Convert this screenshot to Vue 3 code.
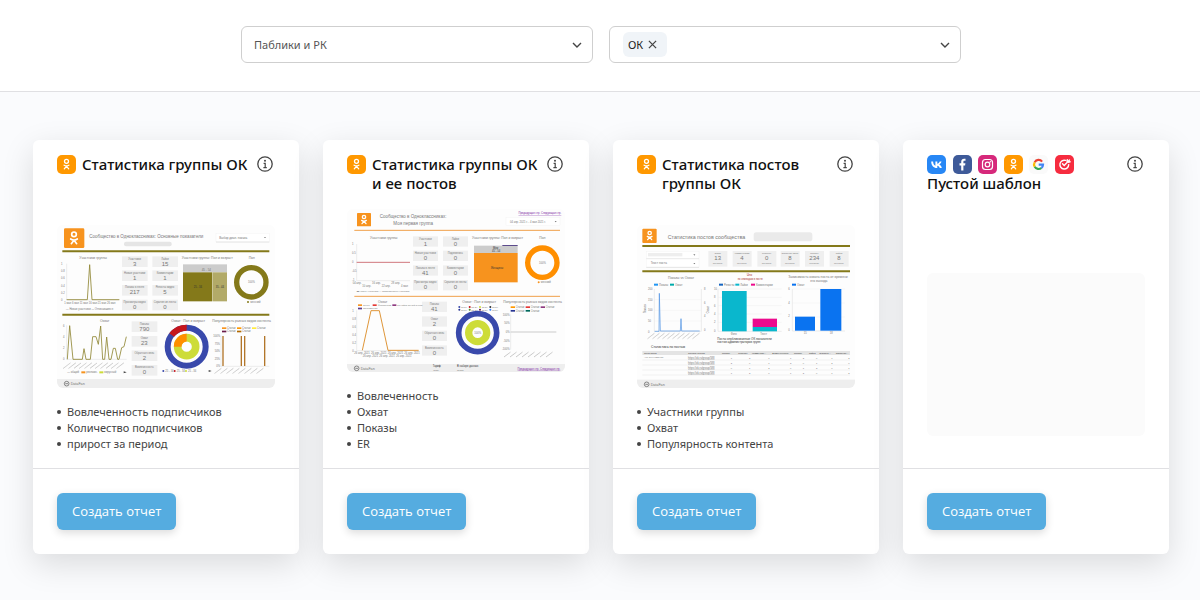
<script setup>
import { ref } from 'vue'

const category = ref('ads')
const network = ref('')
const chips = ref(['ОК'])

const cards = [
  {
    title: 'Статистика группы ОК',
    networks: ['ok'],
    thumb: 'group',
    points: ['Вовлеченность подписчиков', 'Количество подписчиков', 'прирост за период'],
  },
  {
    title: 'Статистика группы ОК и ее постов',
    networks: ['ok'],
    thumb: 'groupPosts',
    points: ['Вовлеченность', 'Охват', 'Показы', 'ER'],
  },
  {
    title: 'Статистика постов группы ОК',
    networks: ['ok'],
    thumb: 'posts',
    points: ['Участники группы', 'Охват', 'Популярность контента'],
  },
  {
    title: 'Пустой шаблон',
    networks: ['vk', 'fb', 'ig', 'ok', 'google', 'target'],
    thumb: 'empty',
    points: [],
  },
]

const names = {
  vk: 'ВКонтакте',
  fb: 'Facebook',
  ig: 'Instagram',
  ok: 'Одноклассники',
  google: 'Google',
  target: 'myTarget',
}

const tilesA = [
  { x: 216, y: 109, label: 'Участники', value: '3' },
  { x: 307, y: 109, label: 'Лайки', value: '15' },
  { x: 216, y: 151, label: 'Новые участники', value: '1' },
  { x: 307, y: 151, label: 'Комментарии', value: '1' },
  { x: 216, y: 195, label: 'Показы в ленте', value: '217' },
  { x: 307, y: 195, label: 'Репосты видео', value: '5' },
  { x: 216, y: 239, label: 'Просмотры видео', value: '0' },
  { x: 307, y: 239, label: 'Скрытия из ленты', value: '0' },
  { x: 245, y: 304, label: 'Показы', value: '790' },
  { x: 245, y: 348, label: 'Охват', value: '23' },
  { x: 245, y: 391, label: 'Обратная связь', value: '2' },
  { x: 245, y: 435, label: 'Вовлеченность', value: '0' },
]

const tilesB = [
  { x: 219, y: 94, label: 'Участники', value: '1' },
  { x: 309, y: 94, label: 'Лайки', value: '0' },
  { x: 219, y: 137, label: 'Новые участники', value: '0' },
  { x: 309, y: 137, label: 'Поделились', value: '0' },
  { x: 219, y: 181, label: 'Показы в ленте', value: '41' },
  { x: 309, y: 181, label: 'Комментарии', value: '0' },
  { x: 219, y: 225, label: 'Просмотры видео', value: '0' },
  { x: 309, y: 225, label: 'Скрытия из ленты', value: '0' },
  { x: 246, y: 290, label: 'Показы', value: '41' },
  { x: 246, y: 334, label: 'Охват', value: '2' },
  { x: 246, y: 377, label: 'Обратная связь', value: '0' },
  { x: 246, y: 421, label: 'Вовлеченность', value: '0' },
]

const tilesC = [
  { x: 235, label: 'Охват', value: '13' },
  { x: 308, label: 'Комментарии', value: '4' },
  { x: 382, label: 'Репосты', value: '0' },
  { x: 452, label: 'Обратная связь', value: '8' },
  { x: 525, label: 'Показы', value: '234' },
  { x: 599, label: 'Лайки', value: '8' },
]

const tableHead = [
  [42, 'Текст поста'], [174, 'Ссылка на пост'], [276, 'Показы'], [325, 'Репосты'], [366, 'Комментар…'],
  [427, 'Вовлеченность'], [492, 'Показы'], [537, 'Лайки'], [568, 'Обратна…'], [617, 'Обратная…'],
]
const tableCols = [302, 357, 415, 480, 518, 558, 604, 655]
</script>

<template>
  <div class="page">
    <header class="filters">
      <div class="field">
        <select v-model="category" class="select" aria-label="Категория">
          <option value="ads">Паблики и РК</option>
        </select>
        <svg class="chevron" viewBox="0 0 10 6" aria-hidden="true"><path d="M1 1l4 4 4-4" /></svg>
      </div>
      <div class="field">
        <select v-model="network" class="select" aria-label="Социальная сеть">
          <option value=""></option>
        </select>
        <div class="chips">
          <span v-for="chip in chips" :key="chip" class="chip">
            {{ chip }}
            <button class="chip-remove" type="button" :aria-label="'Убрать ' + chip" @click="chips = []">
              <svg viewBox="0 0 10 10" aria-hidden="true"><path d="M1 1l8 8M9 1l-8 8" /></svg>
            </button>
          </span>
        </div>
        <svg class="chevron" viewBox="0 0 10 6" aria-hidden="true"><path d="M1 1l4 4 4-4" /></svg>
      </div>
    </header>

    <main class="cards">
      <article v-for="card in cards" :key="card.title" class="card">
        <div class="body">
          <div class="head">
            <div class="heading" :class="{ stacked: card.networks.length > 1 }">
              <div class="networks">
                <svg v-for="n in card.networks" :key="n" class="network" viewBox="0 0 19 19" role="img" :aria-label="names[n]">
                  <template v-if="n === 'ok'">
                    <rect width="19" height="19" rx="5" fill="#ff9800" />
                    <circle cx="9.5" cy="6.3" r="2" fill="none" stroke="#fff" stroke-width="1.3" />
                    <path d="M7.1 10.200q2.400 1.400 4.800 0M9.500 11.200L7.300 13.800M9.500 11.200l2.200 2.600" fill="none" stroke="#fff" stroke-width="1.300" stroke-linecap="round" />
                  </template>
                  <template v-else-if="n === 'vk'">
                    <rect width="19" height="19" rx="5" fill="#2787f5" />
                    <path d="M9.9 13C6.5 13 4.3 10.600 4.200 6.500h1.900c.1 2.600 1.300 3.900 2.300 4.200V6.500h1.900v2.300c1-.1 2-1.200 2.400-2.300h1.800c-.3 1.400-1.400 2.500-2.200 3 .8.4 2 1.300 2.500 3.500h-2c-.4-1.200-1.300-2-2.500-2.200V13z" fill="#fff" />
                  </template>
                  <template v-else-if="n === 'fb'">
                    <rect width="19" height="19" rx="5" fill="#3e5a99" />
                    <path d="M8.200 15.500V10.400H6.500V8.200h1.700V6.700c0-2 1.200-3 2.900-3 .7 0 1.300.1 1.400.1v1.900h-1c-.9 0-1.100.5-1.100 1.100v1.400h2l-.3 2.200h-1.700v5.100z" fill="#fff" />
                  </template>
                  <template v-else-if="n === 'ig'">
                    <rect width="19" height="19" rx="5" fill="#d6297b" />
                    <rect x="4.500" y="4.500" width="10" height="10" rx="3" fill="none" stroke="#fff" stroke-width="1.200" />
                    <circle cx="9.500" cy="9.500" r="2.300" fill="none" stroke="#fff" stroke-width="1.200" />
                    <circle cx="12.300" cy="6.700" r=".7" fill="#fff" />
                  </template>
                  <template v-else-if="n === 'google'">
                    <rect width="19" height="19" rx="5" fill="#fafafa" />
                    <g fill="none" stroke-width="2.200">
                      <path d="M13.100 6.600A4.500 4.500 0 0 0 5.700 7.200" stroke="#ea4335" />
                      <path d="M5.700 7.200A4.500 4.500 0 0 0 5.700 11.800" stroke="#fbbc05" />
                      <path d="M5.700 11.800A4.500 4.500 0 0 0 12.400 13" stroke="#34a853" />
                      <path d="M12.400 13A4.500 4.500 0 0 0 14 9.700H9.700" stroke="#4285f4" />
                    </g>
                  </template>
                  <template v-else>
                    <rect width="19" height="19" rx="5" fill="#f62c3f" />
                    <g fill="none" stroke="#fff" stroke-width="1.400" stroke-linecap="round">
                      <path d="M10.600 5.400A4.400 4.400 0 1 0 13.700 9.600" />
                      <path d="M7.500 8.800l1.700 1.800 4.300-4.500M12 6.300l.3-1.600M13.500 7.200l1.600-.4M13.500 6.100l1-1" />
                    </g>
                  </template>
                </svg>
              </div>
              <h2 class="title">{{ card.title }}</h2>
            </div>
            <button class="info" type="button" aria-label="Подробнее">
              <svg viewBox="0 0 16 16" aria-hidden="true">
                <circle cx="8" cy="8" r="7.200" fill="none" stroke="#444" stroke-width="1.300" />
                <circle cx="8" cy="4.700" r="1" fill="#444" />
                <path d="M6.600 7.300H8.200V11.500M6.400 11.600h3.400" fill="none" stroke="#444" stroke-width="1.200" />
              </svg>
            </button>
          </div>

          <svg v-if="card.thumb === 'group'" class="thumb" viewBox="21 15 654 489" aria-hidden="true">
            <rect x="21" y="15" width="654" height="489" fill="#fdfdfd" />
            <rect x="42" y="25" width="61" height="59" rx="4" fill="#f7931e" />
            <g fill="none" stroke="#fff" stroke-width="5" stroke-linecap="round">
              <circle cx="72" cy="43" r="7" /><path d="M62 57q10 7 20 0M72 61l-8 10M72 61l8 10" />
            </g>
            <text x="118" y="53" font-size="13.500">Сообщество в Одноклассниках: Основные показатели</text>
            <rect x="222" y="65" width="143" height="14" rx="6" fill="#e5e5e5" />
            <rect x="498" y="40" width="160" height="26" fill="#fff" stroke="#eee" /><path d="M498 66h160" stroke="#bbb" />
            <text x="508" y="56" font-size="9">Выбор диап. показа</text><path d="M642 51h6l-3 4z" fill="#777" />
            <path d="M37 94H658M37 284H658" stroke="#84791a" stroke-width="6" />
            <text x="88" y="116" font-size="10">Участники группы</text>
            <text x="395" y="116" font-size="10">Участники группы: Пол и возраст</text><text x="596" y="116" font-size="10">Пол</text>
            <path d="M50 131V240M50 240H208" class="axis" />
            <g font-size="8"><text v-for="(t, i) in ['1', '0.8', '0.6', '0.4', '0.2', '0']" :key="i" x="33" :y="134 + i * 22">{{ t }}</text></g>
            <path d="M50 239H112L119 134L126 239H208" fill="none" stroke="#8f8633" stroke-width="2.500" />
            <text x="43" y="251" font-size="8">1 мая 6 мая 11 мая 16 мая 21 мая 26 мая</text>
            <text x="48" y="269" font-size="8">— Новые участники — Отписавшиеся</text>
            <g v-for="t in tilesA" :key="t.x + '-' + t.y">
              <rect :x="t.x" :y="t.y" width="77" height="32" fill="#efefef" />
              <text :x="t.x + 38" :y="t.y + 10" font-size="8" text-anchor="middle">{{ t.label }}</text>
              <text :x="t.x + 38" :y="t.y + 28" font-size="18" text-anchor="middle">{{ t.value }}</text>
            </g>
            <rect x="399" y="133" width="132" height="24" fill="#ccc" /><text x="455" y="154" font-size="9" fill="#222">45 - 54</text>
            <rect x="399" y="157" width="87" height="87" fill="#84791a" /><rect x="487" y="157" width="44" height="87" fill="#b2aa68" />
            <text x="431" y="204" font-size="8" class="dark">25 - 34</text><text x="497" y="204" font-size="8" class="dark">35 - 44</text>
            <circle cx="604" cy="187" r="44" fill="none" stroke="#84791a" stroke-width="16" /><text x="594" y="190" font-size="8">100%</text>
            <circle cx="594" cy="246" r="3" fill="#84791a" /><text x="601" y="249" font-size="8">женский</text>
            <text x="150" y="306" font-size="10">Охват</text><text x="364" y="306" font-size="10">Охват : Пол и возраст</text>
            <text x="487" y="306" font-size="10">Популярность разных видов контента</text>
            <path d="M50 316V418H230" class="axis" />
            <g font-size="8"><text x="39" y="320">6</text><text x="39" y="354">4</text><text x="39" y="387">2</text><text x="39" y="421">0</text></g>
            <path d="M52 418L59 317L69 418H97L102 386L108 418H121L128 350H138L145 373L152 318L158 418H164L170 351L177 418H183L190 385H196L203 418H207L215 383L222 380L229 350" fill="none" stroke="#8f8633" stroke-width="2.500" />
            <g class="ticks"><path v-for="i in 11" :key="i" :d="`M${24 + i * 16} 445l21-16`" /></g>
            <text x="52" y="460" font-size="8">— общий</text><rect x="94" y="454" width="12" height="6" fill="#f7931e" /><text x="109" y="460" font-size="8">рекламн.</text>
            <rect x="148" y="454" width="12" height="6" fill="#cddc39" /><text x="163" y="460" font-size="8">вирусный</text><path d="M221 454l9 3-9 3z" fill="#444" />
            <circle cx="410" cy="380" r="57" fill="none" stroke="#3949ab" stroke-width="18" />
            <path d="M365 345A57 57 0 0 1 410 323" fill="none" stroke="#c5161d" stroke-width="18" />
            <circle cx="410" cy="380" r="27" fill="none" stroke="#cddc39" stroke-width="23" />
            <path d="M383 380A27 27 0 0 1 410 353" fill="none" stroke="#ff8f00" stroke-width="23" />
            <g v-for="(c, i) in ['#3949ab', '#c5161d', '#cddc39']" :key="c"><circle :cx="340 + i * 34" cy="453" r="3" :fill="c" /><text :x="346 + i * 34" y="456" font-size="8">25 - 34</text></g>
            <path d="M476 450l9 3-9 3z" fill="#444" />
            <g v-for="(c, i) in ['#f7931e', '#ff9800', '#ffeb3b', '#6a1b4a', '#b26a00']" :key="c">
              <rect :x="516 + (i % 3) * 45" :y="i < 3 ? 322 : 332" width="13" height="5" :fill="c" /><text :x="531 + (i % 3) * 45" :y="i < 3 ? 327 : 337" font-size="8">Статьи</text>
            </g>
            <path d="M513 347V439H658" class="axis" /><path d="M519 348V438M574 348V438M584 348V438M644 348V438" stroke="#b2762a" stroke-width="4" />
            <g font-size="8"><text x="490" y="351">100%</text><text x="494" y="374">75%</text><text x="494" y="397">50%</text><text x="494" y="420">25%</text><text x="499" y="442">0%</text></g>
            <g class="ticks"><path v-for="i in 8" :key="i" :d="`M${476 + i * 18} 460l20-15`" /></g>
            <rect x="21" y="477" width="654" height="27" fill="#eee" /><circle cx="50" cy="491" r="7" fill="none" stroke="#555" stroke-width="2" /><path d="M46 491h8" stroke="#555" stroke-width="2" />
            <text x="62" y="495" font-size="11">DataFan</text>
          </svg>

          <svg v-else-if="card.thumb === 'groupPosts'" class="thumb" viewBox="21 12 654 489" aria-hidden="true">
            <rect x="21" y="12" width="654" height="489" fill="#fdfdfd" />
            <rect x="51" y="24" width="42" height="40" rx="2" fill="#f7931e" />
            <g fill="none" stroke="#fff" stroke-width="4" stroke-linecap="round">
              <circle cx="72" cy="36" r="5" /><path d="M65 46q7 5 14 0M72 49l-6 7M72 49l6 7" />
            </g>
            <text x="119" y="39" font-size="13.500">Сообщество в Одноклассниках:</text><text x="160" y="60" font-size="13.500">Моя первая группа</text>
            <text x="664" y="28" font-size="8" class="link" text-anchor="end">Предыдущая стр. Следующая стр.</text>
            <rect x="498" y="37" width="162" height="25" fill="#fff" stroke="#eee" /><text x="510" y="53" font-size="8">04 апр. 2021 г. - 4 мая 2021 г.</text><path d="M644 48h6l-3 4z" fill="#777" />
            <path d="M43 76H660M43 274H660" stroke="#f0a04b" stroke-width="3" />
            <text x="90" y="101" font-size="10">Участники группы</text><text x="396" y="101" font-size="10">Участники группы: Пол и возраст</text><text x="598" y="101" font-size="10">Пол</text>
            <path d="M50 117V227H210" class="axis" />
            <g font-size="8"><text v-for="(t, i) in ['1', '0.5', '0', '-0.5', '-1']" :key="t" x="36" :y="121 + i * 27">{{ t }}</text></g>
            <path d="M50 172H210" stroke="#c65b63" stroke-width="2.500" />
            <g font-size="8"><text v-for="(t, i) in ['04 апр.', '10 апр.', '16 апр.', '22 апр.', '28 апр.', '4 мая']" :key="t" :x="38 + i * 29" :y="237 + (i % 2) * 8">{{ t }}</text></g>
            <text x="50" y="260" font-size="7">▬ Новые участники — Отписавшиеся участники</text>
            <g v-for="t in tilesB" :key="t.x + '-' + t.y">
              <rect :x="t.x" :y="t.y" width="75" height="31" fill="#efefef" />
              <text :x="t.x + 37" :y="t.y + 10" font-size="8" text-anchor="middle">{{ t.label }}</text>
              <text :x="t.x + 37" :y="t.y + 28" font-size="18" text-anchor="middle">{{ t.value }}</text>
            </g>
            <rect x="402" y="122" width="131" height="22" fill="#ccc" /><rect x="487" y="120" width="46" height="3" fill="#5c4b8c" />
            <text x="459" y="131" font-size="8" class="dark">Муж</text><text x="456" y="141" font-size="8" class="dark">45 - 54</text>
            <rect x="402" y="144" width="131" height="88" fill="#f7931e" /><text x="452" y="191" font-size="8" class="dark">Женщины</text>
            <circle cx="607" cy="173" r="44" fill="none" stroke="#ff8f00" stroke-width="16" /><text x="597" y="176" font-size="8">100%</text>
            <circle cx="596" cy="232" r="3" fill="#f7931e" /><text x="602" y="235" font-size="8">женский</text>
            <text x="114" y="293" font-size="10">Охват</text><text x="367" y="293" font-size="10">Охват : Пол и возраст</text><text x="490" y="293" font-size="10">Популярность разных видов контента</text>
            <g v-for="(l, i) in [[54, '#f7931e', 'Лента'], [98, '#e53935', 'Фотоальбом'], [157, '#8e3a80', 'из Найти друзей в сети'], [54, '#5c3b8c', 'Уведомления']]" :key="i">
              <rect :x="l[0]" :y="i < 3 ? 298 : 308" width="12" height="5" :fill="l[1]" /><text :x="l[0] + 15" :y="i < 3 ? 303 : 313" font-size="7">{{ l[2] }}</text>
            </g>
            <path d="M50 316V437H236" class="axis" />
            <g font-size="8"><text v-for="(t, i) in ['1', '0.8', '0.6', '0.4', '0.2', '0']" :key="t" x="37" :y="320 + i * 24">{{ t }}</text></g>
            <path d="M67 436L93 317H118L144 436H236" fill="none" stroke="#df9639" stroke-width="3" />
            <g font-size="8"><text v-for="i in 7" :key="i" :x="18 + i * 25" :y="i % 2 ? 447 : 457">26 апр. 2021</text></g>
            <g v-for="(c, i) in ['#3949ab', '#c5161d', '#cddc39', '#333', '#283593', '#558b2f', '#6a1b4a', '#2979ff']" :key="c">
              <circle :cx="358 + (i % 4) * 31" :cy="i < 4 ? 306 : 314" r="3" :fill="c" /><text :x="363 + (i % 4) * 31" :y="i < 4 ? 309 : 317" font-size="7">18-24</text>
            </g>
            <circle cx="413" cy="383" r="57" fill="none" stroke="#3949ab" stroke-width="17" /><circle cx="413" cy="383" r="27" fill="none" stroke="#cddc39" stroke-width="22" /><text x="403" y="386" font-size="8">100%</text>
            <g v-for="(c, i) in ['#ff9800', '#e53935', '#8e3a80', '#283593', '#00695c']" :key="c">
              <rect :x="512 + (i % 3) * 45" :y="i < 3 ? 304 : 315" width="13" height="5" :fill="c" /><text :x="527 + (i % 3) * 45" :y="i < 3 ? 309 : 320" font-size="8">Статьи</text>
            </g>
            <path d="M512 328V434" class="axis" /><path d="M512 381H649" stroke="#999" stroke-width="1.500" />
            <g font-size="8" text-anchor="end"><text v-for="(t, i) in ['100%', '50%', '0%', '-50%', '-100%']" :key="t" x="509" :y="332 + i * 26">{{ t }}</text></g>
            <g class="ticks"><path v-for="i in 8" :key="i" :d="`M${474 + i * 18} 456l20-15`" /></g>
            <rect x="21" y="477" width="654" height="25" fill="#eee" /><circle cx="50" cy="490" r="7" fill="none" stroke="#555" stroke-width="2" /><path d="M46 490h8" stroke="#555" stroke-width="2" />
            <text x="62" y="494" font-size="11">DataFan</text><text x="278" y="486" font-size="8" class="dark">Тариф</text><text x="351" y="486" font-size="8" class="dark">В наборе данных</text>
            <text x="280" y="497" font-size="7">Стар.</text><text x="351" y="497" font-size="7">Охват</text><text x="661" y="494" font-size="8" class="link" text-anchor="end">Предыдущая стр. Следующая стр.</text>
          </svg>

          <svg v-else-if="card.thumb === 'posts'" class="thumb" viewBox="21 15 654 489" aria-hidden="true">
            <rect x="21" y="15" width="654" height="489" fill="#fdfdfd" />
            <rect x="37" y="26" width="43" height="43" rx="3" fill="#f7931e" />
            <g fill="none" stroke="#fff" stroke-width="4" stroke-linecap="round">
              <circle cx="59" cy="39" r="5" /><path d="M52 49q7 5 14 0M59 52l-6 7M59 52l6 7" />
            </g>
            <text x="113" y="56" font-size="16">Статистика постов сообщества</text>
            <rect x="371" y="37" width="176" height="27" rx="8" fill="#eaeaea" />
            <path d="M37 78H660M37 154H660" stroke="#84791a" stroke-width="6" />
            <rect x="49" y="94" width="158" height="48" fill="#fff" stroke="#eee" /><path d="M49 116H207M49 142H207" stroke="#bbb" /><rect x="54" y="99" width="103" height="10" fill="#eee" />
            <text x="62" y="133" font-size="9">Текст поста</text><path d="M190 103h6l-3 4zM190 129h6l-3 4z" fill="#777" />
            <g v-for="t in tilesC" :key="t.x">
              <rect :x="t.x" y="93" width="57" height="47" fill="#efefef" />
              <text :x="t.x + 28" y="103" font-size="7" text-anchor="middle">{{ t.label }}</text>
              <text :x="t.x + 28" y="121" font-size="18" text-anchor="middle">{{ t.value }}</text>
              <text :x="t.x + 28" y="131" font-size="7" text-anchor="middle">без посл.</text>
            </g>
            <text x="114" y="176" font-size="10">Показы vs Охват</text><text x="350" y="169" font-size="10" class="red">Что</text><text x="323" y="180" font-size="8" class="red">по эпизодам в посте</text>
            <text x="475" y="175" font-size="10">Зависимость охвата поста от времени</text><text x="541" y="187" font-size="10">его выхода</text>
            <g v-for="(l, i) in [[72, '#2196f3', 'Показы'], [120, '#0aa', 'Охват'], [267, '#1565c0', 'Репосты'], [316, '#0ab7cd', 'Лайки'], [363, '#ec0b8d', 'Комментарии'], [486, '#0a73f0', 'Охват']]" :key="i">
              <rect :x="l[0]" y="191" width="12" height="6" :fill="l[1]" /><text :x="l[0] + 15" y="197" font-size="8">{{ l[2] }}</text>
            </g>
            <path d="M73 207V334H214V207M264 207V334H455M487 207V333H645" class="axis" /><path v-for="i in 5" :key="i" :d="`M264 ${182 + i * 25}H455`" stroke="#e8e8e8" />
            <path d="M73 239H214M73 271H214M73 303H214M487 207H645M487 249H645M487 291H645" stroke="#eee" />
            <g font-size="8"><text v-for="(t, i) in ['200', '150', '100', '50', '0']" :key="t" x="54" :y="210 + i * 32">{{ t }}</text><text v-for="(t, i) in ['10', '8', '6', '4', '2', '0']" :key="'b' + t" x="252" :y="210 + i * 25">{{ t }}</text>
              <text v-for="(t, i) in ['6', '4', '2', '0']" :key="'c' + t" x="475" :y="210 + i * 41">{{ t }}</text><text v-for="(t, i) in ['8', '6', '4', '0']" :key="'d' + t" x="222" :y="210 + i * 41">{{ t }}</text></g>
            <path d="M74 334H87L88 220L91 333H151L153 296L155 333H209" fill="none" stroke="#4a90e2" stroke-width="2" />
            <g class="ticks"><path v-for="i in 10" :key="i" :d="`M${38 + i * 15} 356l20-16`" /></g>
            <rect x="276" y="213" width="74" height="121" fill="#0ab7cd" /><rect x="368" y="321" width="73" height="13" fill="#0ab7cd" /><rect x="368" y="296" width="73" height="25" fill="#ec0b8d" />
            <rect x="495" y="290" width="60" height="42" fill="#0a73f0" /><rect x="571" y="207" width="63" height="125" fill="#0a73f0" />
            <text x="302" y="344" font-size="8">Фото</text><text x="391" y="344" font-size="8">Текст</text><text x="521" y="341" font-size="8">15</text><text x="599" y="341" font-size="8">18</text>
            <text x="262" y="361" font-size="9" class="dark">Посты опубликованные ОК показатели</text><text x="262" y="369" font-size="9" class="dark">постов администраторов групп</text>
            <text transform="rotate(-90 48 280)" x="48" y="280" font-size="8">Показы</text><text transform="rotate(-90 238 280)" x="238" y="280" font-size="8">Охват</text>
            <text x="63" y="383" font-size="10" class="dark">Статистика по постам</text>
            <rect x="37" y="393" width="623" height="12" fill="#e4e4e4" /><g font-size="7"><text v-for="h in tableHead" :key="h[0]" :x="h[0]" y="402" class="dark">{{ h[1] }}</text></g>
            <text x="42" y="415" font-size="7">Аня дня Команда!</text>
            <g v-for="r in 4" :key="r"><path :d="`M37 ${405 + r * 15}H660`" stroke="#ddd" /><text x="174" :y="401 + r * 15" font-size="8" text-decoration="underline">https://ok.ru/group/588</text>
              <text v-for="(c, i) in tableCols" :key="c" :x="c" :y="402 + r * 15" font-size="7">{{ (i + r) % 3 }}</text></g>
            <rect x="21" y="479" width="654" height="25" fill="#eee" /><circle cx="50" cy="493" r="7" fill="none" stroke="#555" stroke-width="2" /><path d="M46 493h8" stroke="#555" stroke-width="2" />
            <text x="62" y="497" font-size="11">DataFan</text>
          </svg>

          <div v-else class="thumb blank"></div>

          <ul class="points">
            <li v-for="p in card.points" :key="p">{{ p }}</li>
          </ul>
        </div>
        <div class="foot">
          <button class="create" type="button">Создать отчет</button>
        </div>
      </article>
    </main>
  </div>
</template>

<style>
body {
  background: #fafbfd;
}
</style>

<style scoped>
.page {
  font-family: "Noto Sans", "Open Sans", sans-serif;
  color: #444;
}
.filters {
  display: flex;
  justify-content: center;
  gap: 16px;
  padding: 26px 24px 28px 26px;
  background: #fff;
  border-bottom: 1px solid #e0e0e3;
}
.field {
  position: relative;
  flex: 0 1 352px;
}
.select {
  display: block;
  box-sizing: border-box;
  width: 100%;
  height: 37px;
  padding: 0 32px 0 12px;
  border: 1px solid #cfcfcf;
  border-radius: 6px;
  background: #fff;
  appearance: none;
  font-family: "Noto Sans", "Open Sans", sans-serif;
  font-size: 11px;
  color: #555;
}
.chevron {
  position: absolute;
  right: 11px;
  top: 16px;
  width: 10px;
  height: 6px;
  pointer-events: none;
}
.chevron path,
.chip-remove path {
  fill: none;
  stroke: #444;
  stroke-width: 1.4;
}
.chips {
  position: absolute;
  left: 14px;
  top: 6px;
  display: flex;
}
.chip {
  display: flex;
  align-items: center;
  gap: 5px;
  height: 25px;
  padding: 0 10px 0 5px;
  border-radius: 6px;
  background: #f0f4f8;
  font-size: 11px;
  color: #222;
}
.chip-remove {
  display: flex;
  padding: 0;
  border: 0;
  background: none;
}
.chip-remove svg {
  width: 9px;
  height: 9px;
}
.cards {
  display: grid;
  grid-template-columns: repeat(4, minmax(0, 1fr));
  gap: 24px;
  padding: 48px 31px 46px 33px;
}
.card {
  display: flex;
  flex-direction: column;
  border-radius: 6px;
  background: #fff;
  box-shadow: 0 10px 32px rgba(0, 0, 0, 0.13);
}
.body {
  display: flex;
  flex: 1;
  flex-direction: column;
  padding: 15px 24px 16px;
}
.head {
  display: flex;
  align-items: flex-start;
  justify-content: space-between;
  margin-bottom: 16px;
}
.heading {
  display: flex;
  gap: 6px;
}
.heading.stacked {
  flex-direction: column;
  gap: 0;
}
.stacked .networks {
  width: 147px;
}
.networks {
  display: flex;
  flex: none;
  justify-content: space-between;
}
.network {
  width: 19px;
  height: 19px;
}
.title {
  margin: 0;
  font-size: 15px;
  font-weight: 500;
  line-height: 19px;
  color: #111;
}
.info {
  display: flex;
  flex: none;
  margin: 1px 2px 0 4px;
  padding: 0;
  border: 0;
  background: none;
}
.info svg {
  width: 16px;
  height: 16px;
}
.thumb {
  display: block;
  width: 100%;
  margin-top: auto;
  border-radius: 6px;
  aspect-ratio: 218 / 163;
  font-family: "Liberation Sans", Arial, sans-serif;
}
.thumb text {
  fill: #777;
}
.thumb .dark {
  fill: #333;
}
.thumb .red {
  fill: #a33;
}
.thumb .axis {
  fill: none;
  stroke: #ccc;
  stroke-width: 1;
}
.thumb .ticks {
  fill: none;
  stroke: #bbb;
  stroke-width: 3;
  stroke-dasharray: 3 1;
}
.thumb .link {
  fill: #7b1fa2;
  text-decoration: underline;
}
.blank {
  background: #fbfbfb;
}
.points {
  margin: 16px 0 0;
  padding: 0;
  list-style: none;
  font-size: 11px;
  line-height: 16px;
}
.points li {
  display: flex;
  align-items: center;
  gap: 6px;
}
.points li::before {
  content: "";
  width: 4px;
  height: 4px;
  border-radius: 50%;
  background: #444;
}
.foot {
  padding: 24px;
  border-top: 1px solid #e0e0e3;
}
.create {
  display: block;
  height: 37px;
  padding: 0 15px 1px;
  border: 0;
  border-radius: 6px;
  background: #55ace0;
  box-shadow: 0 3px 8px rgba(0, 0, 0, 0.14);
  font-family: "Open Sans", sans-serif;
  font-size: 13px;
  color: #fff;
}
</style>
